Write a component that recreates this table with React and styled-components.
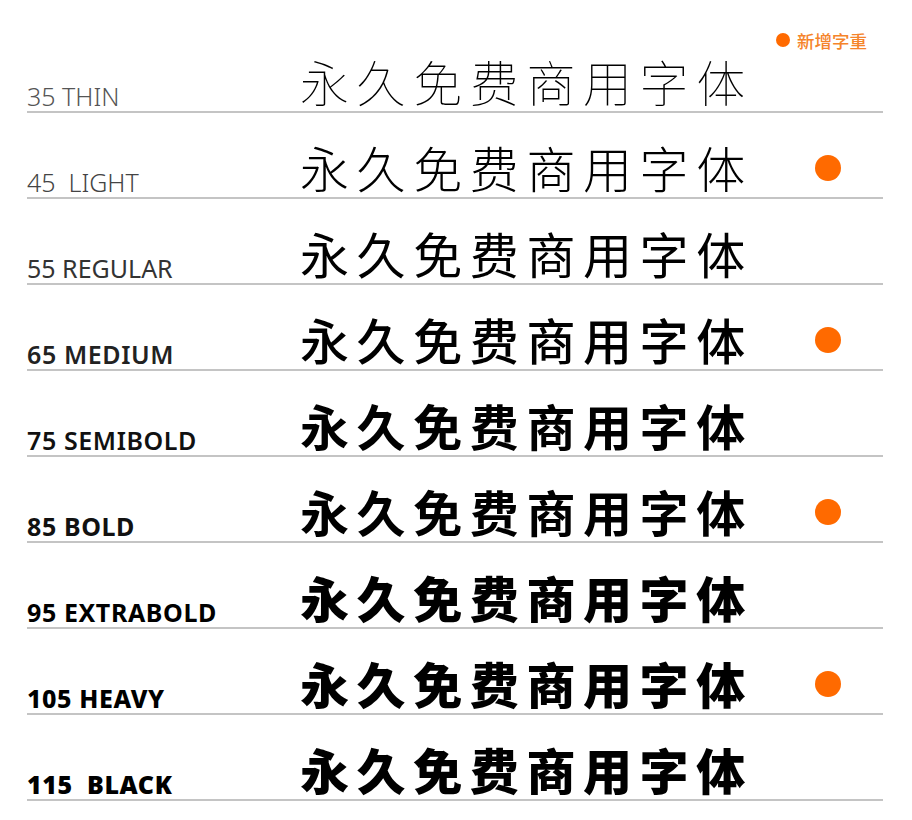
import React from 'react';
import styled, { createGlobalStyle } from 'styled-components';

const weights = [
  { label: '35 THIN', w: 100, lw: 300, color: '#555', dot: false },
  { label: '45  LIGHT', w: 300, lw: 300, color: '#444', dot: true },
  { label: '55 REGULAR', w: 400, lw: 400, color: '#333', dot: false },
  { label: '65 MEDIUM', w: 500, lw: 600, color: '#222', dot: true },
  { label: '75 SEMIBOLD', w: 600, lw: 600, color: '#111', dot: false },
  { label: '85 BOLD', w: 700, lw: 700, color: '#111', dot: true },
  { label: '95 EXTRABOLD', w: 800, lw: 700, color: '#000', dot: false },
  { label: '105 HEAVY', w: 900, lw: 800, color: '#000', dot: true },
  { label: '115  BLACK', w: 900, lw: 900, color: '#000', dot: false },
];

const App = () => {
  return (
    <Page>
      <GlobalStyle />
      <Legend>
        <LegendDot />
        新增字重
      </Legend>
      {weights.map((item, i) => (
        <Row key={item.label} first={i === 0}>
          <Label weight={item.lw} color={item.color}>{item.label}</Label>
          <Sample weight={item.w}>永久免费商用字体</Sample>
          <DotCell>{item.dot && <Dot />}</DotCell>
        </Row>
      ))}
    </Page>
  );
};

export default App;

const GlobalStyle = createGlobalStyle`
  body {
    margin: 0;
    background: #fff;
    font-family: "Noto Sans", "Noto Sans CJK SC", sans-serif;
  }
`;

const Page = styled.div`
  width: 856px;
  padding: 27px 29px 0 27px;
  display: flex;
  flex-direction: column;
`;

const Legend = styled.div`
  align-self: flex-end;
  margin-right: 16px;
  height: 26px;
  display: flex;
  align-items: center;
  gap: 7px;
  font-family: "Noto Sans CJK SC", sans-serif;
  font-size: 17.5px;
  font-weight: 500;
  color: #f5842a;
`;

const LegendDot = styled.span`
  width: 14px;
  height: 14px;
  border-radius: 50%;
  background: #ff6a00;
`;

const Row = styled.div`
  height: ${p => (p.first ? '58px' : '84px')};
  border-bottom: 2px solid #c4c4c4;
  display: grid;
  grid-template-columns: 273px 1fr 110px;
  align-items: end;
`;

const Label = styled.div`
  white-space: pre;
  font-family: "Noto Sans", sans-serif;
  font-size: 25px;
  font-weight: ${p => p.weight};
  letter-spacing: ${p => (p.weight >= 600 ? '0.6px' : '0')};
  color: ${p => p.color};
  line-height: 1;
  padding-bottom: 2px;
`;

const Sample = styled.div`
  font-family: "Noto Sans CJK SC", sans-serif;
  font-size: 49px;
  font-weight: ${p => p.weight};
  letter-spacing: 7.6px;
  color: #000;
  line-height: 1;
  padding-bottom: 6px;
`;

const DotCell = styled.div`
  display: flex;
  justify-content: flex-end;
  padding: 0 42px 16px 0;
`;

const Dot = styled.span`
  width: 26px;
  height: 26px;
  border-radius: 50%;
  background: #ff6a00;
`;
